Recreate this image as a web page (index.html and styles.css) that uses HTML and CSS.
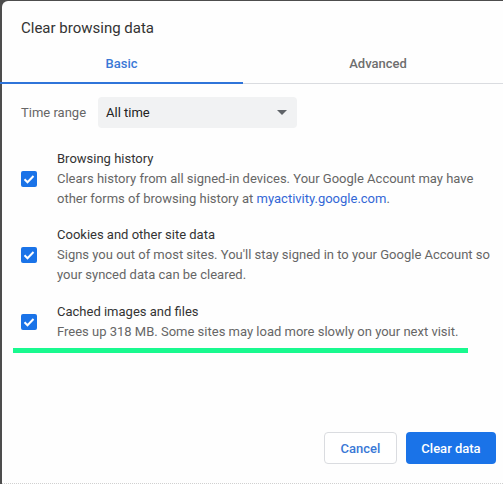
FILE: index.html
```html
<!DOCTYPE html>
<html lang="en">
<head>
    <meta charset="UTF-8">
    <title>Clear browsing data</title>
    <link rel="stylesheet" href="styles.css">
</head>
<body>

    <div class="dialog">
        <h1 class="dialog-title">Clear browsing data</h1>

        <!-- Tabs -->
        <div class="tabs">
            <div class="tab active">Basic</div>
            <div class="tab">Advanced</div>
        </div>

        <div class="dialog-body">
            <div class="time-range">
                <span class="time-label">Time range</span>
                <div class="select">
                    <span>All time</span>
                    <span class="select-arrow"></span>
                </div>
            </div>

            <div class="option">
                <div class="checkbox">
                    <svg viewBox="0 0 16 16" width="16" height="16"><path d="M3.5 8.2l3 3 6-6.2" fill="none" stroke="#fff" stroke-width="2"/></svg>
                </div>
                <div class="option-text">
                    <div class="option-title">Browsing history</div>
                    <div class="option-desc">Clears history from all signed-in devices. Your Google Account may have other forms of browsing history at <a href="#">myactivity.google.com</a>.</div>
                </div>
            </div>

            <div class="option">
                <div class="checkbox">
                    <svg viewBox="0 0 16 16" width="16" height="16"><path d="M3.5 8.2l3 3 6-6.2" fill="none" stroke="#fff" stroke-width="2"/></svg>
                </div>
                <div class="option-text">
                    <div class="option-title">Cookies and other site data</div>
                    <div class="option-desc">Signs you out of most sites. You'll stay signed in to your Google Account so your synced data can be cleared.</div>
                </div>
            </div>

            <div class="option last">
                <div class="checkbox">
                    <svg viewBox="0 0 16 16" width="16" height="16"><path d="M3.5 8.2l3 3 6-6.2" fill="none" stroke="#fff" stroke-width="2"/></svg>
                </div>
                <div class="option-text">
                    <div class="option-title">Cached images and files</div>
                    <div class="option-desc">Frees up 318 MB. Some sites may load more slowly on your next visit.</div>
                </div>
            </div>

            <div class="highlight"></div>
        </div>

        <div class="dialog-buttons">
            <button class="btn cancel">Cancel</button>
            <button class="btn primary">Clear data</button>
        </div>
    </div>

</body>
</html>
```

FILE: styles.css
```css
/* General Styling */
body {
    margin: 0;
    background: #4d4d4d;
    font-family: Roboto, 'Liberation Sans', sans-serif;
    height: 484px;
    overflow: hidden;
}

.dialog {
    margin: 1px 0 0 2px;
    background: #fefefe;
    border-top-left-radius: 6px;
    height: 483px;
    display: flex;
    flex-direction: column;
    border-bottom: 1px dotted #d0d0d0;
    box-sizing: border-box;
}

.dialog-title {
    margin: 0;
    padding: 17px 0 0 19px;
    font-size: 15px;
    font-weight: normal;
    color: #333;
    height: 27px;
    line-height: 20px;
}

/* Tabs */
.tabs {
    display: flex;
    border-bottom: 1px solid #dadce0;
    margin-top: 1px;
}

.tab {
    flex: 1;
    text-align: center;
    font-size: 13px;
    font-weight: 500;
    color: #6e6e6e;
    padding: 10px 0 10px 10px;
    border-bottom: 2px solid transparent;
    line-height: 16px;
    margin-bottom: -1px;
}

.tab.active {
    flex: 0 0 243px;
    padding-left: 0;
    color: #3a78d6;
    border-bottom-color: #2f74d9;
    margin-left: -2px;
}

.dialog-body {
    padding: 13px 0 0 19px;
    flex: 1;
}

/* Time range */
.time-range {
    display: flex;
    align-items: center;
    font-size: 13px;
}

.time-label {
    color: #666;
    width: 77px;
}

.select {
    width: 199px;
    height: 31px;
    background: #f1f2f3;
    border-radius: 4px;
    display: flex;
    align-items: center;
    justify-content: space-between;
    padding: 0 8px;
    box-sizing: border-box;
    color: #222;
}

.select-arrow {
    width: 0;
    height: 0;
    border-left: 5px solid transparent;
    border-right: 5px solid transparent;
    border-top: 5px solid #5f6368;
    margin-right: 2px;
}

/* Options */
.option {
    display: flex;
    align-items: center;
    margin-top: 21px;
}

.option + .option {
    margin-top: 16px;
}

.option.last {
    margin-top: 17px;
}

.checkbox {
    width: 16px;
    height: 16px;
    background: #1a73e8;
    border-radius: 2px;
    flex-shrink: 0;
    margin-right: 20px;
}

.checkbox svg {
    display: block;
}

.option-text {
    font-size: 13px;
    line-height: 20px;
    color: #333;
}

.option-desc {
    color: #666;
    padding-right: 6px;
}

.option-desc a {
    color: #3367d6;
    text-decoration: none;
}

.highlight {
    height: 5px;
    background: #19f98f;
    margin: 6px 35px 0 -8px;
}

/* Buttons */
.dialog-buttons {
    display: flex;
    justify-content: flex-end;
    gap: 9px;
    padding: 0 7px 19px 0;
}

.btn {
    font-family: Roboto, 'Liberation Sans', sans-serif;
    font-size: 13px;
    font-weight: 500;
    height: 32px;
    border-radius: 4px;
    padding: 0;
    white-space: nowrap;
    cursor: pointer;
}

.cancel {
    background: #fff;
    color: #3a78d6;
    border: 1px solid #dadce0;
    width: 73px;
}

.primary {
    background: #1a73e8;
    color: #fff;
    border: none;
    width: 90px;
}
```
